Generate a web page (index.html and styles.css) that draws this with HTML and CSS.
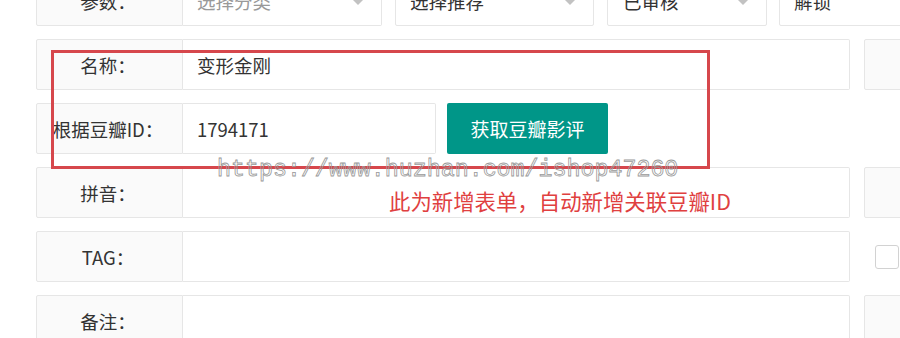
FILE: index.html
```html
<!DOCTYPE html>
<html lang="zh-CN">
<head>
  <meta charset="UTF-8" />
  <title>影片编辑</title>
  <link rel="stylesheet" href="styles.css">
</head>
<body>

  <div class="form">
    <!-- 参数 -->
    <div class="row">
      <label class="label">参数：</label>
      <div class="select first placeholder">选择分类<i class="caret"></i></div>
      <div class="select">选择推荐<i class="caret"></i></div>
      <div class="select narrow">已审核<i class="caret"></i></div>
      <div class="select wide">解锁</div>
    </div>

    <!-- 名称 -->
    <div class="row">
      <label class="label">名称：</label>
      <div class="field">变形金刚</div>
      <div class="side box"></div>
    </div>

    <!-- 豆瓣 -->
    <div class="row">
      <label class="label">根据豆瓣ID：</label>
      <div class="field short">1794171</div>
      <button class="btn">获取豆瓣影评</button>
    </div>

    <div class="row">
      <label class="label">拼音：</label>
      <div class="field"></div>
      <div class="side box"></div>
    </div>

    <div class="row">
      <label class="label">TAG：</label>
      <div class="field"></div>
      <div class="side"><span class="checkbox"></span></div>
    </div>

    <div class="row">
      <label class="label">备注：</label>
      <div class="field"></div>
      <div class="side box"></div>
    </div>

    <!-- annotations -->
    <div class="mark"></div>
    <div class="watermark">https://www.huzhan.com/ishop47260</div>
    <div class="note">此为新增表单，自动新增关联豆瓣ID</div>
  </div>

</body>
</html>
```

FILE: styles.css
```css
body {
  margin: 0;
  background: #fff;
  font-family: "Noto Sans CJK SC", "Noto Sans", sans-serif;
  color: #333;
  overflow: hidden;
}

.form {
  position: relative;
  margin-top: -25px;
  padding-left: 36px;
}

.row {
  display: flex;
  height: 51px;
  margin-bottom: 13px;
}

.row > * {
  flex-shrink: 0;
}

.label {
  width: 147px;
  box-sizing: border-box;
  border: 1px solid #e6e6e6;
  border-radius: 2px 0 0 2px;
  background: #fafafa;
  display: flex;
  align-items: center;
  justify-content: center;
  padding-right: 3px;
  font-size: 18.5px;
  white-space: nowrap;
}

.field {
  width: 667px;
  box-sizing: border-box;
  border: 1px solid #e6e6e6;
  border-left: none;
  border-radius: 0 2px 2px 0;
  padding-left: 14px;
  display: flex;
  align-items: center;
  font-size: 18.5px;
}

.field.short {
  width: 253px;
}

.btn {
  margin-left: 11px;
  width: 161px;
  height: 51px;
  border: none;
  border-radius: 2px;
  background: #009688;
  color: #fff;
  font-family: inherit;
  font-size: 19px;
  padding: 0;
}

.side {
  margin-left: 14px;
  width: 60px;
  display: flex;
  align-items: center;
}

.side.box {
  box-sizing: border-box;
  border: 1px solid #e6e6e6;
  border-radius: 2px;
  background: #fafafa;
}

.checkbox {
  margin-left: 11px;
  width: 24px;
  height: 24px;
  box-sizing: border-box;
  border: 1px solid #d2d2d2;
  border-radius: 3px;
  background: #fff;
}

/* selects on the first row */
.select {
  width: 199px;
  margin-left: 13px;
  box-sizing: border-box;
  border: 1px solid #e6e6e6;
  border-radius: 2px;
  padding: 0 18px 0 14px;
  display: flex;
  align-items: center;
  font-size: 18.5px;
}

.select.first {
  margin-left: 0;
  border-left: none;
  border-radius: 0 2px 2px 0;
}

.select.placeholder {
  color: #999;
}

.select.narrow {
  width: 160px;
  padding-left: 15px;
}

.select.wide {
  width: 200px;
  margin-left: 12px;
}

.caret {
  margin-left: auto;
  margin-top: 4px;
  width: 0;
  height: 0;
  border-top: 5px solid #c2c2c2;
  border-left: 5px solid transparent;
  border-right: 5px solid transparent;
}

/* screenshot annotations */
.mark {
  position: absolute;
  left: 51px;
  top: 75px;
  width: 659px;
  height: 119px;
  box-sizing: border-box;
  border: 3px solid #d6474c;
}

.watermark {
  position: absolute;
  left: 217px;
  top: 180px;
  font-family: "Liberation Mono", monospace;
  font-size: 23.3px;
  line-height: 30px;
  color: transparent;
  -webkit-text-stroke: 0.8px #999;
  white-space: nowrap;
}

.note {
  position: absolute;
  left: 389px;
  top: 211px;
  font-size: 21.4px;
  line-height: 30px;
  color: #e0403f;
  white-space: nowrap;
}
```
